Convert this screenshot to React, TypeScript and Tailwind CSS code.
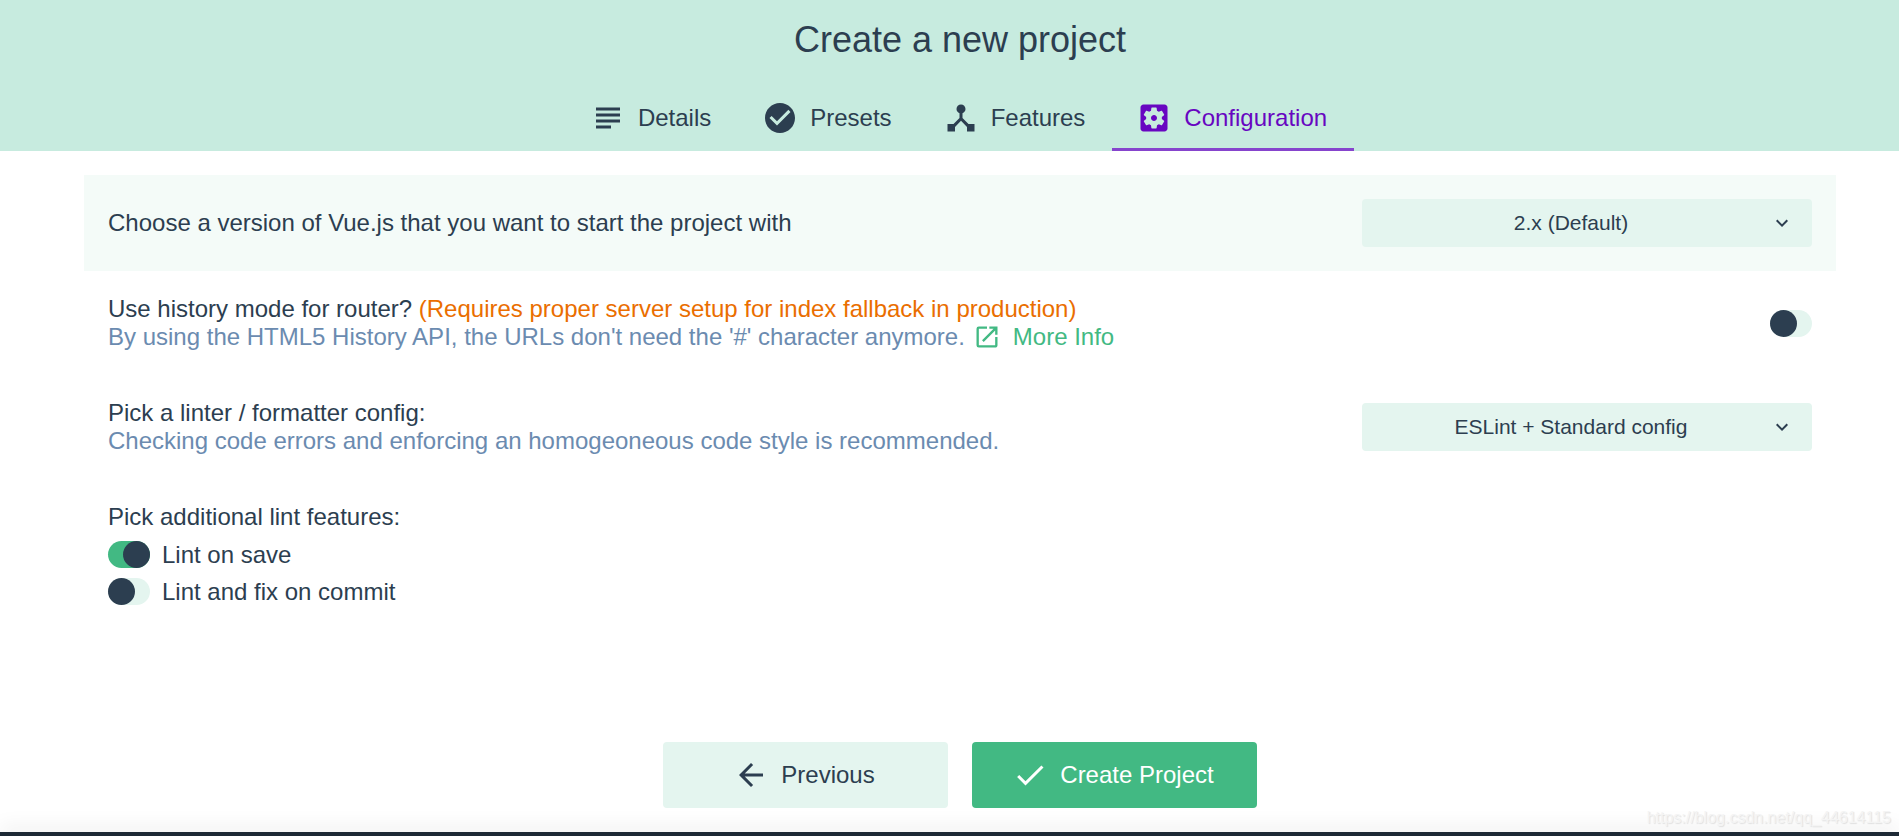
import { useState } from 'react'
import type { ComponentType, ReactNode } from 'react'
import {
  MdArrowBack,
  MdCheck,
  MdDeviceHub,
  MdKeyboardArrowDown,
  MdOpenInNew,
  MdSubject,
} from 'react-icons/md'

interface IconProps {
  className?: string
}

function CheckCircleIcon({ className }: IconProps) {
  return (
    <svg viewBox="0 0 24 24" fill="currentColor" className={className}>
      <path d="M12 2C6.48 2 2 6.48 2 12s4.48 10 10 10 10-4.48 10-10S17.52 2 12 2zm-2 15l-5-5 1.41-1.41L10 14.17l7.59-7.59L19 8l-9 9z" />
    </svg>
  )
}

function SettingsIcon({ className }: IconProps) {
  return (
    <svg viewBox="0 0 24 24" fill="currentColor" className={className}>
      <path d="M12 10c-1.1 0-2 .9-2 2s.9 2 2 2 2-.9 2-2-.9-2-2-2zm7-7H5c-1.11 0-2 .9-2 2v14c0 1.1.89 2 2 2h14c1.11 0 2-.9 2-2V5c0-1.1-.89-2-2-2zm-1.75 9c0 .23-.02.46-.05.68l1.48 1.16c.13.11.17.3.08.45l-1.4 2.42c-.09.15-.27.21-.43.15l-1.74-.7c-.36.28-.76.51-1.18.69l-.26 1.85c-.03.17-.18.3-.35.3h-2.8c-.17 0-.32-.13-.35-.29l-.26-1.85c-.43-.18-.82-.41-1.18-.69l-1.74.7c-.16.06-.34 0-.43-.15l-1.4-2.42c-.09-.15-.05-.34.08-.45l1.48-1.16c-.03-.23-.05-.46-.05-.69 0-.23.02-.46.05-.68l-1.48-1.16c-.13-.11-.17-.3-.08-.45l1.4-2.42c.09-.15.27-.21.43-.15l1.74.7c.36-.28.76-.51 1.18-.69l.26-1.85c.03-.17.18-.3.35-.3h2.8c.17 0 .32.13.35.29l.26 1.85c.43.18.82.41 1.18.69l1.74-.7c.16-.06.34 0 .43.15l1.4 2.42c.09.15.05.34-.08.45l-1.48 1.16c.03.23.05.46.05.69z" />
    </svg>
  )
}

const tabs: { id: string; label: string; icon: ComponentType<IconProps> }[] = [
  { id: 'details', label: 'Details', icon: MdSubject },
  { id: 'presets', label: 'Presets', icon: CheckCircleIcon },
  { id: 'features', label: 'Features', icon: MdDeviceHub },
  { id: 'configuration', label: 'Configuration', icon: SettingsIcon },
]

interface SelectProps {
  id: string
  options: string[]
}

function Select({ id, options }: SelectProps) {
  return (
    <div className="relative w-[450px] shrink-0">
      <select
        id={id}
        className="block h-12 w-full cursor-pointer appearance-none rounded bg-[#e4f5ef] pl-6 pr-14 text-[21px] [text-align-last:center]"
      >
        {options.map((option) => (
          <option key={option}>{option}</option>
        ))}
      </select>
      <MdKeyboardArrowDown className="pointer-events-none absolute inset-y-0 right-[18px] my-auto size-6" />
    </div>
  )
}

interface SwitchProps {
  id: string
  defaultChecked?: boolean
}

function Switch({ id, defaultChecked }: SwitchProps) {
  return (
    <input
      id={id}
      type="checkbox"
      role="switch"
      defaultChecked={defaultChecked}
      className="h-[27px] w-[42px] shrink-0 cursor-pointer appearance-none rounded-full bg-[#e4f5ef] before:block before:size-[27px] before:rounded-full before:bg-[#2c3e50] before:transition-transform checked:bg-[#42b983] checked:before:translate-x-[15px]"
    />
  )
}

function Row({ highlighted, children }: { highlighted?: boolean; children: ReactNode }) {
  return (
    <div className={`flex items-center justify-between gap-6 p-6 ${highlighted ? 'bg-[#f4fbf8]' : ''}`}>
      {children}
    </div>
  )
}

export default function App() {
  const [active, setActive] = useState('configuration')

  return (
    <div className="relative flex min-h-screen flex-col bg-white font-['Liberation_Sans',Arial,sans-serif] text-2xl leading-7 text-[#2c3e50]">
      <header className="flex flex-col items-center bg-[#c7ebdf] pl-[21px]">
        <h1 className="py-5 text-4xl leading-10">Create a new project</h1>
        <nav className="mt-1 flex" role="tablist">
          {tabs.map(({ id, label, icon: Icon }) => (
            <button
              key={id}
              type="button"
              role="tab"
              aria-selected={active === id}
              onClick={() => setActive(id)}
              className={`flex h-[67px] cursor-pointer items-center gap-3 border-b-3 pl-6 pr-[27px] pt-[3px] ${
                active === id ? 'border-[#8644cd] text-[#6806c1]' : 'border-transparent'
              }`}
            >
              <Icon className="size-9" />
              {label}
            </button>
          ))}
        </nav>
      </header>

      <main className="grow pl-[84px] pr-[63px] pt-6">
        <Row highlighted>
          <label htmlFor="vue-version">Choose a version of Vue.js that you want to start the project with</label>
          <Select id="vue-version" options={['2.x (Default)', '3.x (Preview)']} />
        </Row>

        <Row>
          <div>
            <label htmlFor="history-mode">
              Use history mode for router?{' '}
              <span className="text-[#ea6e00]">(Requires proper server setup for index fallback in production)</span>
            </label>
            <p className="flex items-center text-[#6b8bb0]">
              By using the HTML5 History API, the URLs don't need the '#' character anymore.
              <a href="#more-info" className="ml-2 flex items-center gap-3 text-[#42b983]">
                <MdOpenInNew className="size-7" />
                More Info
              </a>
            </p>
          </div>
          <Switch id="history-mode" />
        </Row>

        <Row>
          <div>
            <label htmlFor="linter">Pick a linter / formatter config:</label>
            <p className="text-[#6b8bb0]">
              Checking code errors and enforcing an homogeoneous code style is recommended.
            </p>
          </div>
          <Select id="linter" options={['ESLint + Standard config', 'ESLint + Airbnb config', 'ESLint + Prettier']} />
        </Row>

        <fieldset className="p-6">
          <legend className="float-left w-full pb-[5px]">Pick additional lint features:</legend>
          <div className="clear-both flex h-[37px] items-center gap-3">
            <Switch id="lint-on-save" defaultChecked />
            <label htmlFor="lint-on-save">Lint on save</label>
          </div>
          <div className="flex h-[37px] items-center gap-3">
            <Switch id="lint-on-commit" />
            <label htmlFor="lint-on-commit">Lint and fix on commit</label>
          </div>
        </fieldset>
      </main>

      <div className="flex justify-center gap-6 py-6 pl-5">
        <button
          type="button"
          className="flex h-[66px] w-[285px] cursor-pointer items-center justify-center gap-3 rounded bg-[#e4f5ef] pr-0.5"
        >
          <MdArrowBack className="size-9" />
          Previous
        </button>
        <button
          type="button"
          className="flex h-[66px] w-[285px] cursor-pointer items-center justify-center gap-3 rounded bg-[#42b983] pr-0.5 text-white"
        >
          <MdCheck className="size-9" />
          Create Project
        </button>
      </div>

      <footer className="h-1 bg-[#1d2935] shadow-[0_-2px_20px_rgba(0,0,0,0.2)]" />
      <span className="absolute bottom-2 right-2 text-base leading-5 text-[#f4f4f4] [text-shadow:1px_1px_1px_#e0e0e0]">
        https://blog.csdn.net/qq_44614115
      </span>
    </div>
  )
}
